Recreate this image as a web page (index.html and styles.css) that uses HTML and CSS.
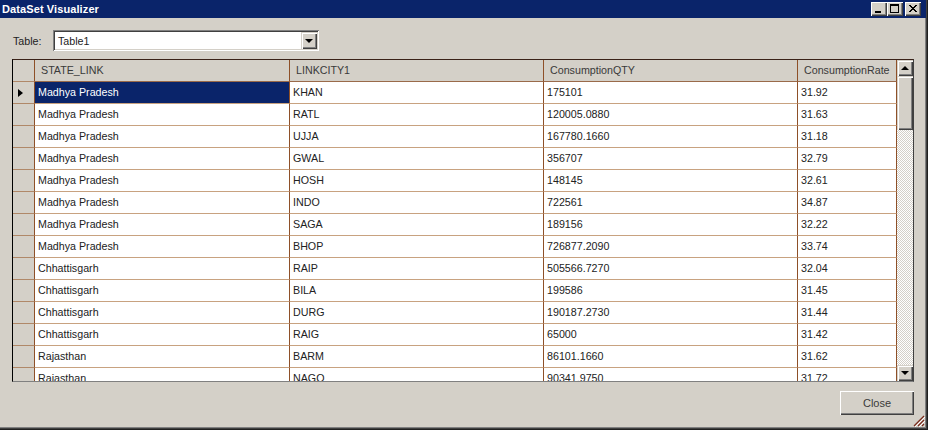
FILE: index.html
```html
<!DOCTYPE html>
<html>
<head>
<meta charset="utf-8">
<link rel="stylesheet" href="styles.css">
</head>
<body>
<div class="window">
  <div class="titlebar">
    <span class="title">DataSet Visualizer</span>
    <div class="caption-buttons">
      <span class="cap-btn"><svg width="16" height="14" viewBox="0 0 16 14"><rect x="4" y="9" width="6" height="2" fill="#000"/></svg></span>
      <span class="cap-btn"><svg width="16" height="14" viewBox="0 0 16 14"><rect x="3.5" y="2.5" width="8" height="8" fill="none" stroke="#000"/><rect x="3" y="2" width="9" height="2" fill="#000"/></svg></span>
      <span class="cap-btn close"><svg width="16" height="14" viewBox="0 0 16 14"><path d="M4 3 L11 10 M5 3 L12 10 M11 3 L4 10 M12 3 L5 10" stroke="#000" stroke-width="1"/></svg></span>
    </div>
  </div>
  <div class="content">
    <div class="table-select">
      <label class="select-label">Table:</label>
      <div class="combo">
        <span class="combo-text">Table1</span>
        <span class="combo-btn"><span class="arrow-down"></span></span>
      </div>
    </div>
    <div class="grid">
      <div class="grid-body">
        <div class="row header">
          <div class="cell rh"></div>
          <div class="cell hc">STATE_LINK</div>
          <div class="cell hc">LINKCITY1</div>
          <div class="cell hc">ConsumptionQTY</div>
          <div class="cell hc">ConsumptionRate</div>
        </div>
        <div class="row">
          <div class="cell rh"><span class="row-arrow"></span></div>
          <div class="cell sel">Madhya Pradesh</div>
          <div class="cell">KHAN</div>
          <div class="cell">175101</div>
          <div class="cell">31.92</div>
        </div>
        <div class="row"><div class="cell rh"></div><div class="cell">Madhya Pradesh</div><div class="cell">RATL</div><div class="cell">120005.0880</div><div class="cell">31.63</div></div>
        <div class="row"><div class="cell rh"></div><div class="cell">Madhya Pradesh</div><div class="cell">UJJA</div><div class="cell">167780.1660</div><div class="cell">31.18</div></div>
        <div class="row"><div class="cell rh"></div><div class="cell">Madhya Pradesh</div><div class="cell">GWAL</div><div class="cell">356707</div><div class="cell">32.79</div></div>
        <div class="row"><div class="cell rh"></div><div class="cell">Madhya Pradesh</div><div class="cell">HOSH</div><div class="cell">148145</div><div class="cell">32.61</div></div>
        <div class="row"><div class="cell rh"></div><div class="cell">Madhya Pradesh</div><div class="cell">INDO</div><div class="cell">722561</div><div class="cell">34.87</div></div>
        <div class="row"><div class="cell rh"></div><div class="cell">Madhya Pradesh</div><div class="cell">SAGA</div><div class="cell">189156</div><div class="cell">32.22</div></div>
        <div class="row"><div class="cell rh"></div><div class="cell">Madhya Pradesh</div><div class="cell">BHOP</div><div class="cell">726877.2090</div><div class="cell">33.74</div></div>
        <div class="row"><div class="cell rh"></div><div class="cell">Chhattisgarh</div><div class="cell">RAIP</div><div class="cell">505566.7270</div><div class="cell">32.04</div></div>
        <div class="row"><div class="cell rh"></div><div class="cell">Chhattisgarh</div><div class="cell">BILA</div><div class="cell">199586</div><div class="cell">31.45</div></div>
        <div class="row"><div class="cell rh"></div><div class="cell">Chhattisgarh</div><div class="cell">DURG</div><div class="cell">190187.2730</div><div class="cell">31.44</div></div>
        <div class="row"><div class="cell rh"></div><div class="cell">Chhattisgarh</div><div class="cell">RAIG</div><div class="cell">65000</div><div class="cell">31.42</div></div>
        <div class="row"><div class="cell rh"></div><div class="cell">Rajasthan</div><div class="cell">BARM</div><div class="cell">86101.1660</div><div class="cell">31.62</div></div>
        <div class="row"><div class="cell rh"></div><div class="cell">Rajasthan</div><div class="cell">NAGO</div><div class="cell">90341.9750</div><div class="cell">31.72</div></div>
      </div>
      <div class="vscroll">
        <div class="sb-btn"><span class="arrow-up"></span></div>
        <div class="sb-thumb"></div>
        <div class="sb-track"></div>
        <div class="sb-btn"><span class="arrow-down"></span></div>
      </div>
    </div>
    <div class="footer">
      <button class="btn">Close</button>
    </div>
  </div>
  <svg class="grip" width="12" height="12" viewBox="0 0 12 12">
    <path d="M11 1 L1 11 M11 5 L5 11 M11 9 L9 11" stroke="#7a2a1a" stroke-width="1.2"/>
    <path d="M12 2 L2 12 M12 6 L6 12" stroke="#ffffff" stroke-width="1"/>
  </svg>
</div>
</body>
</html>
```

FILE: styles.css
```css
* { box-sizing: border-box; }
html, body {
  margin: 0;
  padding: 0;
  width: 928px;
  height: 430px;
  overflow: hidden;
  background: #d4d0c8;
  font-family: "Liberation Sans", Arial, sans-serif;
  font-size: 10.7px;
  color: #222;
}
.window {
  position: relative;
  width: 928px;
  height: 430px;
  background: #d4d0c8;
  box-shadow: inset -1px -1px #202020, inset -2px -2px #404040, inset -3px -3px #808080;
}
.titlebar {
  height: 18px;
  background: #0a246a;
  color: #fff;
  display: flex;
  align-items: center;
  justify-content: space-between;
  padding: 0 5px 0 2px;
  margin-right: 2px;
}
.title {
  font-weight: bold;
  font-size: 11px;
  letter-spacing: 0.1px;
}
.caption-buttons {
  display: flex;
  align-items: center;
}
.cap-btn {
  width: 16px;
  height: 14px;
  background: #d4d0c8;
  box-shadow: inset 1px 1px #fff, inset -1px -1px #404040, inset -2px -2px #808080;
  display: block;
}
.cap-btn svg { display: block; }
.cap-btn.close { margin-left: 2px; }
.content {
  padding: 12px 15px 0 12px;
}
.table-select {
  display: flex;
  align-items: center;
  height: 21px;
}
.select-label {
  width: 41px;
  padding-left: 1px;
}
.combo {
  width: 266px;
  height: 21px;
  background: #fff;
  box-shadow: inset 1px 1px #808080, inset -1px -1px #fff, inset 2px 2px #404040, inset -2px -2px #d4d0c8;
  display: flex;
  align-items: center;
  justify-content: space-between;
  padding: 2px;
}
.combo-text {
  padding-left: 3px;
}
.combo-btn {
  width: 16px;
  height: 17px;
  background: #d4d0c8;
  box-shadow: inset 1px 1px #d4d0c8, inset 2px 2px #fff, inset -1px -1px #404040, inset -2px -2px #808080;
  display: flex;
  align-items: center;
  justify-content: center;
}
.arrow-down {
  width: 0;
  height: 0;
  border-left: 4px solid transparent;
  border-right: 4px solid transparent;
  border-top: 4px solid #000;
}
.arrow-up {
  width: 0;
  height: 0;
  border-left: 4px solid transparent;
  border-right: 4px solid transparent;
  border-bottom: 4px solid #000;
}
.grid {
  margin-top: 8px;
  width: 902px;
  height: 323px;
  display: flex;
  border-left: 1px solid #000;
  border-top: 1px solid #3a2218;
  border-right: 1px solid #404040;
  border-bottom: 1px solid #808080;
  background: #fff;
}
.grid-body {
  width: 884px;
  height: 321px;
  overflow: hidden;
}
.row {
  display: grid;
  grid-template-columns: 22px 255px 254px 254px 99px;
  height: 22px;
}
.cell {
  height: 22px;
  border-right: 1px solid #8e5028;
  border-bottom: 1px solid #c8a280;
  padding-left: 3px;
  line-height: 21px;
  white-space: nowrap;
  overflow: hidden;
  background: #fff;
}
.header .cell {
  background: #d4d0c8;
  color: #3a3a3a;
  border-bottom: 1px solid #9a6a4a;
}
.cell.hc { padding-left: 6px; }
.cell.rh {
  background: #d4d0c8;
  padding-left: 5px;
  display: flex;
  align-items: center;
  border-bottom: 1px solid #b08868;
}
.cell.sel {
  background: #0a246a;
  color: #fff;
}
.row-arrow {
  width: 0;
  height: 0;
  border-top: 4px solid transparent;
  border-bottom: 4px solid transparent;
  border-left: 5px solid #000;
}
.vscroll {
  width: 16px;
  height: 321px;
  display: flex;
  flex-direction: column;
}
.sb-btn {
  height: 16px;
  background: #d4d0c8;
  box-shadow: inset 1px 1px #d4d0c8, inset 2px 2px #fff, inset -1px -1px #404040, inset -2px -2px #808080;
  display: flex;
  align-items: center;
  justify-content: center;
}
.sb-thumb {
  height: 54px;
  background: #d4d0c8;
  box-shadow: inset 1px 1px #d4d0c8, inset 2px 2px #fff, inset -1px -1px #404040, inset -2px -2px #808080;
}
.sb-track {
  flex: 1;
  background-color: #fff;
  background-image: conic-gradient(#d4d0c8 25%, #fff 0 50%, #d4d0c8 0 75%, #fff 0);
  background-size: 2px 2px;
}
.footer {
  display: flex;
  justify-content: flex-end;
  margin-top: 9px;
  width: 902px;
}
.btn {
  width: 74px;
  height: 24px;
  font-family: "Liberation Sans", Arial, sans-serif;
  font-size: 11px;
  color: #3a3a3a;
  background: #d4d0c8;
  border: none;
  box-shadow: inset 1px 1px #fff, inset -1px -1px #404040, inset -2px -2px #808080;
  padding: 0;
}
.grip {
  position: absolute;
  right: 3px;
  bottom: 3px;
}
```
